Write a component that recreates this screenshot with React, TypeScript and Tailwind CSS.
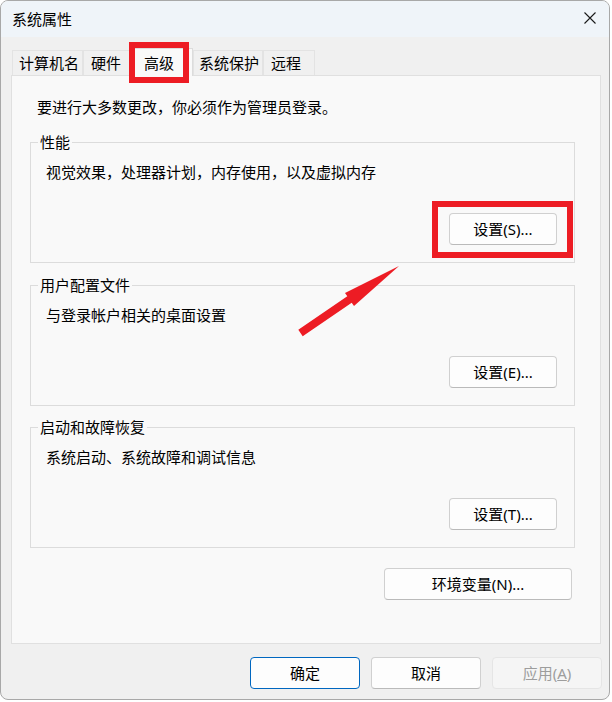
import React from 'react';

const font = "font-['Noto_Sans','Noto_Sans_CJK_SC',sans-serif]";

const tabs = [
  { label: '计算机名', cls: 'w-[71px] pl-[6px]' },
  { label: '硬件', cls: 'w-[47px] pl-[7px]' },
  { label: '高级', cls: 'w-[63px] pl-[13px]', active: true },
  { label: '系统保护', cls: 'w-[70px] pl-[5px]' },
  { label: '远程', cls: 'w-[52px] pl-[7px]' },
];

const Button = ({ children, className = '' }: { children: React.ReactNode; className?: string }) => (
  <button
    className={`h-[32px] rounded-[4px] border border-[#d0d0d0] border-b-[#bababa] bg-[#fdfdfd] text-[15px] leading-[20px] text-black ${className}`}
  >
    {children}
  </button>
);

const Group = ({ title, desc, button }: { title: string; desc: string; button: string }) => (
  <fieldset className="border border-[#dcdcdc] p-0 m-0 min-w-0">
    <legend className="ml-[7px] px-[2px] text-[15px] leading-[20px] text-black">{title}</legend>
    <div className="flex flex-col pl-[15px] pr-[17px] pb-[17px]">
      <div className="mt-[10px] text-[15px] leading-[20px] text-black">{desc}</div>
      <Button className="mt-[31px] self-end w-[108px]">{button}</Button>
    </div>
  </fieldset>
);

export default function App() {
  return (
    <div className={`relative w-[612px] h-[702px] bg-white ${font}`}>
      <div className="w-[610px] h-[700px] rounded-[8px] border border-[#a8a8a8] bg-[#f0f0f0] flex flex-col overflow-hidden">
        {/* Title bar */}
        <div className="h-[36px] shrink-0 bg-[#eff4f9] flex items-center justify-between pl-[11px] pr-[12px]">
          <span className="text-[15px] leading-[20px] text-black -mt-[1px]">系统属性</span>
          <svg width="12" height="12" viewBox="0 0 12 12" className="mr-[1px] -mt-[2px]">
            <path d="M0.5 0.5 L11.5 11.5 M11.5 0.5 L0.5 11.5" stroke="#1a1a1a" strokeWidth="1.1" fill="none" />
          </svg>
        </div>

        {/* Tabs */}
        <div className="relative z-10 h-[39px] -mb-px shrink-0 flex items-end pl-[11px]">
          {tabs.map((t) =>
            t.active ? (
              <div
                key={t.label}
                className={`${t.cls} h-[28px] flex items-center bg-[#f9f9f9] border border-b-0 border-[#dcdcdc] text-[15px] leading-[20px] text-black`}
              >
                {t.label}
              </div>
            ) : (
              <div
                key={t.label}
                className={`${t.cls} h-[25px] mb-px flex items-center bg-[#f0f0f0] border border-b-0 border-[#e3e3e3] text-[15px] leading-[20px] text-black`}
              >
                {t.label}
              </div>
            )
          )}
        </div>

        {/* Panel */}
        <div className="ml-[10px] w-[590px] h-[569px] shrink-0 border border-[#e0e0e0] bg-[#f9f9f9] flex flex-col pl-[18px] pr-[25px] pt-[21px]">
          <div className="ml-[7px] text-[15px] leading-[20px] text-black">要进行大多数更改，你必须作为管理员登录。</div>
          <div className="mt-[15px]">
            <Group title="性能" desc="视觉效果，处理器计划，内存使用，以及虚拟内存" button="设置(S)..." />
          </div>
          <div className="mt-[12px]">
            <Group title="用户配置文件" desc="与登录帐户相关的桌面设置" button="设置(E)..." />
          </div>
          <div className="mt-[11px]">
            <Group title="启动和故障恢复" desc="系统启动、系统故障和调试信息" button="设置(T)..." />
          </div>
          <Button className="mt-[20px] self-end mr-[3px] w-[188px]">环境变量(N)...</Button>
        </div>

        {/* Footer buttons */}
        <div className="mt-[13px] flex justify-end gap-[11px] pr-[7px]">
          <Button className="w-[110px] !border-[#0067c0]">确定</Button>
          <Button className="w-[110px]">取消</Button>
          <button className="w-[110px] h-[32px] rounded-[4px] border border-[#e5e5e5] bg-[#f5f5f5] text-[15px] leading-[20px] text-[#9d9d9d]">
            应用(<span className="underline">A</span>)
          </button>
        </div>
      </div>

      {/* Annotations */}
      <div className="absolute left-[129px] top-[42px] w-[60px] h-[41px] border-[6px] border-[#ed1c24] z-20" />
      <div className="absolute left-[432px] top-[201px] w-[141px] h-[57px] border-[6px] border-[#ed1c24] z-20" />
      <svg className="absolute left-0 top-0 z-20 pointer-events-none" width="612" height="702">
        <polygon
          points="298.3,329.7 347.3,296.2 345,293 399,266 354,306 351.7,302.8 302.7,336.3"
          fill="#ed1c24"
        />
      </svg>
    </div>
  );
}
